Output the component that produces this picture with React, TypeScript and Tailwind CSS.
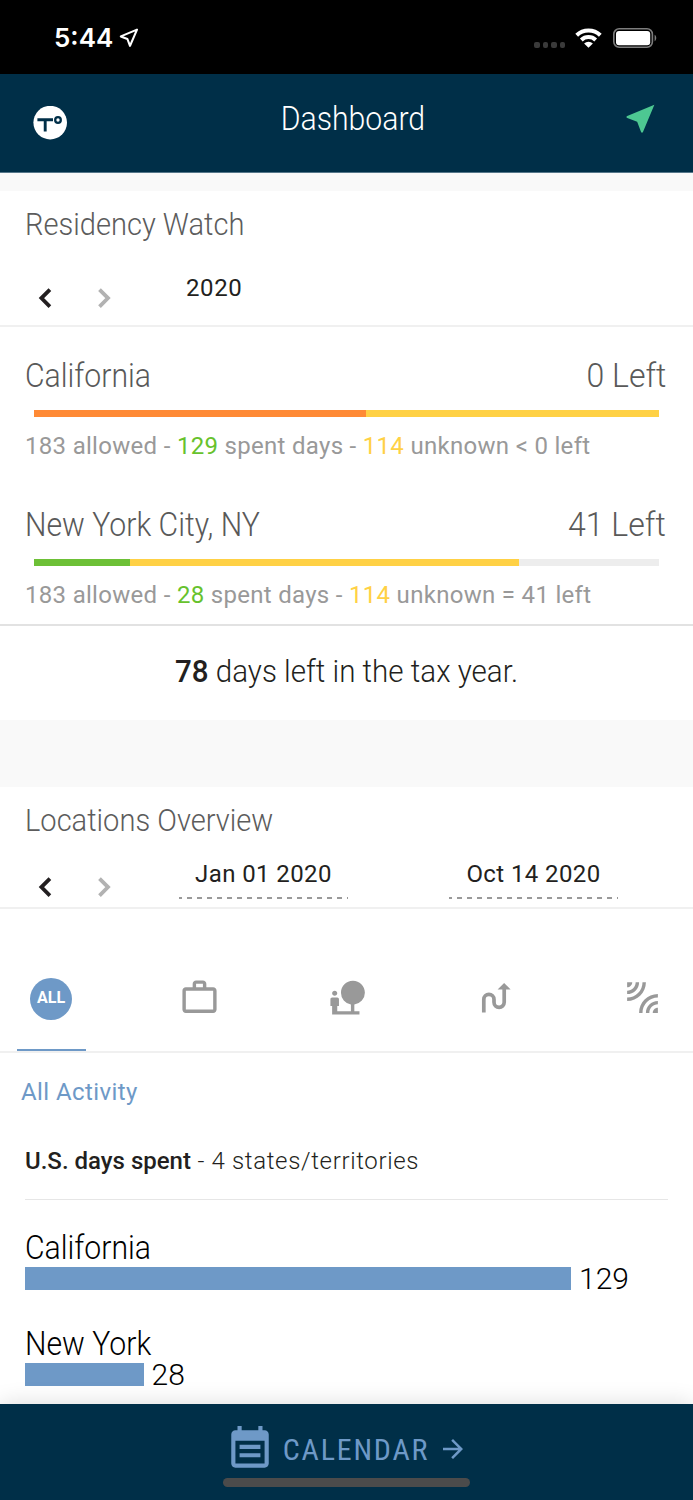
import type { ReactNode } from "react"
import { MdArrowForward, MdLeakAdd, MdNaturePeople, MdNearMe, MdWorkOutline } from "react-icons/md"

const residency = [
  { name: "California", allowed: 183, spent: 129, unknown: 114, sign: "<", left: 0, over: true },
  { name: "New York City, NY", allowed: 183, spent: 28, unknown: 114, sign: "=", left: 41, over: false },
]

const states = [
  { name: "California", days: 129 },
  { name: "New York", days: 28 },
]

function StatusBar() {
  return (
    <div className="flex h-[74px] shrink-0 items-center justify-between bg-black pl-[54px] pr-[36px] text-white">
      <div className="flex items-center gap-[4px] pt-[2px]">
        <span className="font-['Inter'] text-[26px] font-semibold leading-8">5:44</span>
        <svg viewBox="0 0 24 24" className="size-[24px]" fill="none" stroke="white" strokeWidth="2.1">
          <path d="M20 3.6L3.8 10.4l6.6 2.6 2.6 6.8z" strokeLinejoin="round" />
        </svg>
      </div>
      <div className="flex items-center pt-[2px]">
        <div className="mr-[10px] mt-[14px] flex gap-[3px]">
          {[0, 1, 2, 3].map((n) => (
            <span key={n} className="size-[5.5px] rounded-[2px] bg-[#3a3a3a]" />
          ))}
        </div>
        <svg viewBox="0 0 27 20" className="mr-[11px] h-5 w-[27px]" fill="none" stroke="white" strokeWidth="4">
          <path d="M1.7 7.2A17 17 0 0 1 25.3 7.2" />
          <path d="M6.3 12A10.4 10.4 0 0 1 20.7 12" />
          <path d="M9.1 15.4a6.4 6.4 0 0 1 8.8 0L13.5 19.8z" fill="white" stroke="none" />
        </svg>
        <svg viewBox="0 0 44 20" className="h-5 w-11">
          <rect x="0.8" y="0.8" width="38.6" height="18.4" rx="5.4" fill="none" stroke="#7d7d7d" strokeWidth="1.6" />
          <rect x="3" y="3" width="34.2" height="14.2" rx="3" fill="white" />
          <path d="M41.6 6.8c2.2 1 2.2 5.4 0 6.4z" fill="#7d7d7d" />
        </svg>
      </div>
    </div>
  )
}

function Logo() {
  return (
    <svg viewBox="0 0 34 34" className="size-[34px]">
      <circle cx="17.2" cy="16.6" r="16.8" fill="white" />
      <path d="M4.4 13.8h15.6M12.2 13.8V25.6" fill="none" stroke="#002f48" strokeWidth="2.9" />
      <circle cx="25" cy="14" r="2.8" fill="none" stroke="#002f48" strokeWidth="2.3" />
    </svg>
  )
}

function Arrows() {
  return (
    <div className="flex gap-[20px] pl-[26px]">
      <svg viewBox="0 0 39 39" className="size-[39px] text-[#231f20]">
        <path d="M23.9 10.6l-8.5 8.5 8.5 8.5" fill="none" stroke="currentColor" strokeWidth="3.8" />
      </svg>
      <svg viewBox="0 0 39 39" className="size-[39px] text-[#b2b2b2]">
        <path d="M14.5 10.6l8.5 8.5-8.5 8.5" fill="none" stroke="currentColor" strokeWidth="3.8" />
      </svg>
    </div>
  )
}

function SectionTitle({ children }: { children: ReactNode }) {
  return (
    <h2 className="origin-left scale-x-[0.923] whitespace-nowrap text-[31.5px] font-light leading-10 text-[#5c5c5c]">
      {children}
    </h2>
  )
}

function DateField({ children }: { children: ReactNode }) {
  return (
    <div className="flex w-[169px] flex-col gap-2 text-center text-2xl leading-[30px] tracking-[0.4px] text-[#231f20]">
      <span className="whitespace-nowrap">{children}</span>
      <svg className="h-[2px] w-full" viewBox="0 0 169 2">
        <path d="M0 1h169" stroke="#999" strokeWidth="2" strokeDasharray="5 5" strokeDashoffset="2" />
      </svg>
    </div>
  )
}

function Tab({ active, children }: { active?: boolean; children: ReactNode }) {
  return (
    <div
      className={
        active
          ? "flex h-[142px] w-[69px] items-start justify-center border-b-2 border-[#6e99c7] pr-px pt-[69px]"
          : "flex h-[142px] w-[69px] items-start justify-center pt-[68px]"
      }
    >
      {children}
    </div>
  )
}

function RouteIcon() {
  return (
    <svg viewBox="0 0 40 40" className="ml-[2px] size-10">
      <path
        d="M7.8 35.6V22.5a5.1 5.1 0 0 1 10.2 0v2.8a5.1 5.1 0 0 0 10.2 0V11"
        fill="none"
        stroke="currentColor"
        strokeWidth="3.7"
      />
      <path d="M28.1 5.9l6.5 6.5H21.6z" fill="currentColor" />
    </svg>
  )
}

function CalendarIcon() {
  return (
    <svg viewBox="0 0 24 24" className="size-[50px]" fill="currentColor">
      <path d="M17 10H7v2h10v-2zm2-7h-1V1h-2v2H8V1H6v2H5c-1.11 0-1.99.9-1.99 2L3 19c0 1.1.89 2 2 2h14c1.1 0 2-.9 2-2V5c0-1.1-.9-2-2-2zm0 16H5V8h14v11zm-2-5H7v2h10v-2z" />
    </svg>
  )
}

export default function App() {
  const maxDays = 129

  return (
    <div className="flex h-[1500px] w-full flex-col overflow-hidden bg-[#f9f9f9] font-['Roboto',sans-serif]">
      <StatusBar />

      <header className="flex h-[99px] shrink-0 items-center justify-between border-b border-[#56778a] bg-[#002f48] pl-[33px] pr-[34px]">
        <Logo />
        <h1 className="-mt-[9px] ml-[17px] scale-x-[0.915] text-[33px] font-light leading-10 text-white">Dashboard</h1>
        <MdNearMe className="-mt-[9px] size-[37px] text-[#4dc892]" />
      </header>

      {/* Residency watch */}
      <section className="mt-[18px] h-[529px] shrink-0 bg-white">
        <div className="border-b-2 border-[#f0f0f0] pt-[14px]">
          <div className="pl-[25px]">
            <SectionTitle>Residency Watch</SectionTitle>
          </div>
          <div className="flex h-[80px] items-start">
            <div className="pt-[34px]">
              <Arrows />
            </div>
            <span className="ml-[62px] mt-[28px] text-2xl leading-[30px] tracking-[0.6px] text-[#231f20]">2020</span>
          </div>
        </div>

        <div className="flex flex-col gap-[44px] border-b-2 border-[#e2e2e2] pb-[14px] pt-[29px]">
          {residency.map((r) => {
            const total = Math.max(r.allowed, r.spent + r.unknown)
            return (
              <div key={r.name}>
                <div className="flex justify-between pl-[25px] pr-[27px] text-[33px] font-light leading-10 text-[#595959]">
                  <span className="origin-left scale-x-[0.915]">{r.name}</span>
                  <span className="origin-right scale-x-[0.97]">{r.left} Left</span>
                </div>
                <div className="ml-[34px] mr-[34px] mt-[14px] flex h-[7px] bg-[#ededed]">
                  <div
                    className={r.over ? "bg-[#ff8a35]" : "bg-[#6dc036]"}
                    style={{ width: `${(r.spent / total) * 100}%` }}
                  />
                  <div className="bg-[#ffd145]" style={{ width: `${(r.unknown / total) * 100}%` }} />
                </div>
                <p className="mt-[14px] whitespace-nowrap pl-[25px] text-2xl leading-[30px] tracking-[0.3px] text-[#999]">
                  {r.allowed} allowed - <span className="text-[#67c22d]">{r.spent}</span> spent days -{" "}
                  <span className="text-[#ffd145]">{r.unknown}</span> unknown {r.sign} {r.left} left
                </p>
              </div>
            )
          })}
        </div>

        <p className="scale-x-[0.938] pt-[26px] text-center text-[31.5px] font-light leading-10 text-[#231f20]">
          <span className="font-medium">78</span> days left in the tax year.
        </p>
      </section>

      {/* Locations overview */}
      <section className="mt-[67px] min-h-0 flex-1 bg-white">
        <div className="border-b-2 border-[#f0f0f0] pt-[14px]">
          <div className="pl-[25px]">
            <SectionTitle>Locations Overview</SectionTitle>
          </div>
          <div className="flex h-[66px] items-start">
            <div className="pt-[27px]">
              <Arrows />
            </div>
            <div className="ml-[55px] mt-[18px] flex gap-[101px]">
              <DateField>Jan 01 2020</DateField>
              <DateField>Oct 14 2020</DateField>
            </div>
          </div>
        </div>

        <nav className="flex justify-between border-b-2 border-[#f0f0f0] pl-[17px] pr-[16px] text-[#999]">
          <Tab active>
            <div className="flex size-[42px] items-center justify-center rounded-full bg-[#6e99c7] pb-[3px] text-base font-bold leading-5 text-white">
              ALL
            </div>
          </Tab>
          <Tab>
            <MdWorkOutline className="size-[41px]" />
          </Tab>
          <Tab>
            <MdNaturePeople className="size-[41px]" />
          </Tab>
          <Tab>
            <RouteIcon />
          </Tab>
          <Tab>
            <MdLeakAdd className="size-[41px]" />
          </Tab>
        </nav>

        <p className="pl-[21px] pt-[24px] text-2xl leading-[30px] tracking-[0.4px] text-[#6e99c7]">All Activity</p>

        <div className="mx-[25px]">
          <p className="mt-[39px] border-b border-[#e6e6e6] pb-[23px] text-2xl font-light leading-[30px] tracking-[0.66px] text-[#231f20]">
            <span className="font-medium tracking-normal">U.S. days spent</span> - 4 states/territories
          </p>
          <div className="mt-[28px] flex flex-col gap-[34px] text-black">
            {states.map((s) => (
              <div key={s.name} className="flex flex-col">
                <div className="-mb-px origin-left scale-x-[0.915] text-[33px] font-light leading-10">{s.name}</div>
                <div className="flex h-[23px] items-center gap-2">
                  <div className="h-full bg-[#6e99c7]" style={{ width: (s.days / maxDays) * 546 }} />
                  <span className="text-[30px] font-light leading-9">{s.days}</span>
                </div>
              </div>
            ))}
          </div>
        </div>
      </section>

      <footer className="relative flex h-[96px] shrink-0 flex-col items-center bg-[#002f48] shadow-[0_0_22px_rgba(0,0,0,0.14)]">
        <div className="mt-[20px] flex h-[50px] items-center text-[#6e99c7]">
          <CalendarIcon />
          <span className="ml-[8px] mt-[2px] text-[30px] leading-9 tracking-[1.8px] font-stretch-condensed">CALENDAR</span>
          <MdArrowForward className="ml-[9px] size-[30px]" />
        </div>
        <div className="mt-[4px] h-[9px] w-[247px] rounded-full bg-[#4b4b4b]" />
      </footer>
    </div>
  )
}
